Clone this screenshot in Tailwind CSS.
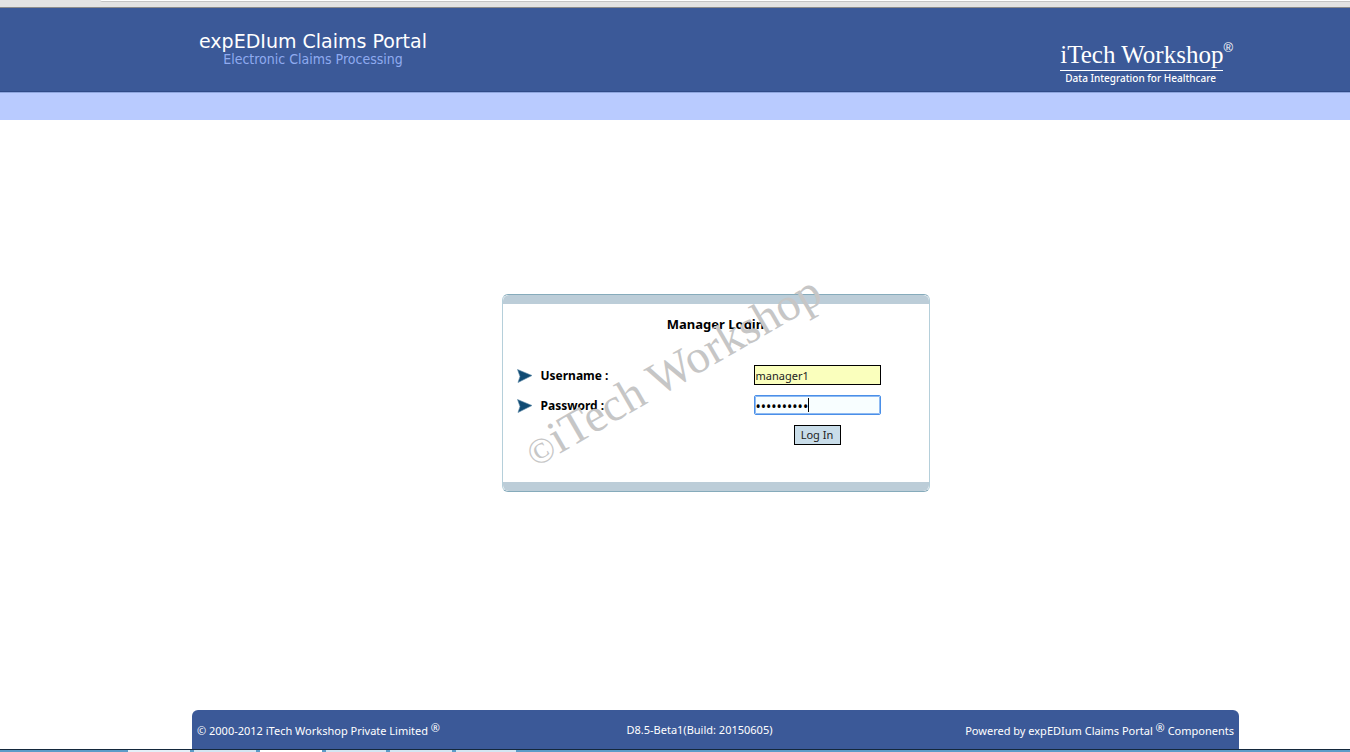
<!DOCTYPE html>
<html lang="en">
<head>
  <meta charset="UTF-8" />
  <meta name="viewport" content="width=device-width, initial-scale=1.0" />
  <title>expEDIum Claims Portal - Manager Login</title>
  <script src="https://cdn.jsdelivr.net/npm/@tailwindcss/browser@4"></script>
</head>
<body class="bg-white text-black min-h-screen flex flex-col font-['Noto_Sans',sans-serif] text-xs">

  <!-- bottom edge of the browser toolbar -->
  <div class="h-2 shrink-0 bg-[#e3e3e3] border-b border-[#8c8c8c]">
    <div class="ml-[100px] h-[2px] rounded-bl bg-white border-b border-[#c4c4c4]"></div>
  </div>

  <header>
    <div class="h-[84px] bg-[#3b5998] border-b border-[#2f4a87] pl-[198px] pr-[117px] flex justify-between">
      <div class="pt-[22px] w-[230px] text-center">
        <h1 class="font-['DejaVu_Sans',sans-serif] text-[19px] leading-[22px] text-white whitespace-nowrap">expEDIum Claims Portal</h1>
        <p class="font-['DejaVu_Sans_Condensed','DejaVu_Sans',sans-serif] text-sm leading-[15px] text-[#8fabf0] whitespace-nowrap">Electronic Claims Processing</p>
      </div>
      <div class="pt-8 text-white">
        <div class="flex items-start">
          <span class="border-b border-white font-['Liberation_Serif',serif] text-[25px] leading-[30px] whitespace-nowrap">iTech Workshop</span>
          <span class="font-['Liberation_Sans',sans-serif] text-[13px] leading-4">®</span>
        </div>
        <p class="pl-[5px] text-[10px] leading-[14px] font-medium whitespace-nowrap">Data Integration for Healthcare</p>
      </div>
    </div>
    <div class="h-7 bg-[#b9cbff] border-t border-[#8ea6de]"></div>
  </header>

  <div class="grow flex flex-col ml-48 mr-[111px]">

    <main class="grow pt-[174px]">
      <section class="relative mx-auto w-[428px] rounded-md border border-[#b5cfda] border-y-[#86abbb] bg-white">
        <div class="h-[9px] rounded-t-md bg-[#bccdd8]"></div>
        <h2 class="mt-3 text-center text-[13px] leading-4 font-bold">Manager Login</h2>

        <form class="mt-[33px] pl-[14px] pr-12 flex flex-col" onsubmit="return false">
          <div class="h-[30px] flex items-start justify-between">
            <label for="username" class="flex items-center gap-2 h-[22px] font-bold">
              <svg class="w-4 h-4" viewBox="0 0 16 16"><path d="M0.5 1.5 L15 7.5 L1 14.5 L3 8.5 Z" fill="#0f4a73" stroke="#5d8aa8" stroke-width="0.6" /></svg>
              Username :
            </label>
            <input type="text" id="username" value="manager1" class="w-[127px] h-5 px-px pt-px text-[11px] border border-black bg-[#faffbd] text-[#222]" />
          </div>
          <div class="h-[30px] flex items-start justify-between">
            <label for="password" class="flex items-center gap-2 h-[22px] font-bold">
              <svg class="w-4 h-4" viewBox="0 0 16 16"><path d="M0.5 1.5 L15 7.5 L1 14.5 L3 8.5 Z" fill="#0f4a73" stroke="#5d8aa8" stroke-width="0.6" /></svg>
              Password :
            </label>
            <div class="relative">
              <input type="password" id="password" value="manager123" class="block w-[127px] h-5 px-px pt-[3px] text-sm rounded-xs border border-[#4a8fe8] outline outline-[#8fbaf2] -outline-offset-2 bg-[#f8feff]" />
              <span class="absolute left-[54px] top-[3px] w-px h-[14px] bg-black"></span>
            </div>
          </div>
          <div class="w-[127px] self-end text-center">
            <button type="submit" class="block mx-auto w-[47px] h-5 pt-px text-[11px] border border-black bg-[#c9dde9] text-[#222]">Log In</button>
          </div>
        </form>

        <div class="mt-[37px] h-[9px] rounded-b-md bg-[#bccdd8]"></div>

        <span class="absolute left-[39px] top-[130px] origin-bottom-left -rotate-30 pointer-events-none whitespace-nowrap font-['Liberation_Serif',serif] text-[47px] leading-[50px] text-[#c6c6c6]"><span class="text-[36px]">©</span>iTech Workshop</span>
      </section>
    </main>

    <footer class="h-[39px] px-[5px] rounded-t-md bg-[#3b5998] text-white text-[11px] leading-[39px] grid grid-cols-3 whitespace-nowrap">
      <span class="pt-px">© 2000-2012 iTech Workshop Private Limited <sup class="-top-[3px] text-[11px]">®</sup></span>
      <span class="pr-8 text-center">D8.5-Beta1(Build: 20150605)</span>
      <span class="pt-px text-right">Powered by expEDIum Claims Portal <sup class="-top-[3px] text-[11px]">®</sup> Components</span>
    </footer>
  </div>

  <!-- top edge of the desktop taskbar -->
  <div class="h-[3px] shrink-0 border-t border-[#14283c] bg-[#5c9cc8] flex gap-1 pl-32">
    <div class="w-[62px] bg-[#e4f0f8]"></div>
    <div class="w-[62px] bg-[#d4e6f3]"></div>
    <div class="w-[62px] bg-white"></div>
    <div class="w-[60px] bg-[#d4e6f3]"></div>
    <div class="w-[62px] bg-[#d4e6f3]"></div>
    <div class="w-[60px] bg-[#d4e6f3]"></div>
  </div>

</body>
</html>
